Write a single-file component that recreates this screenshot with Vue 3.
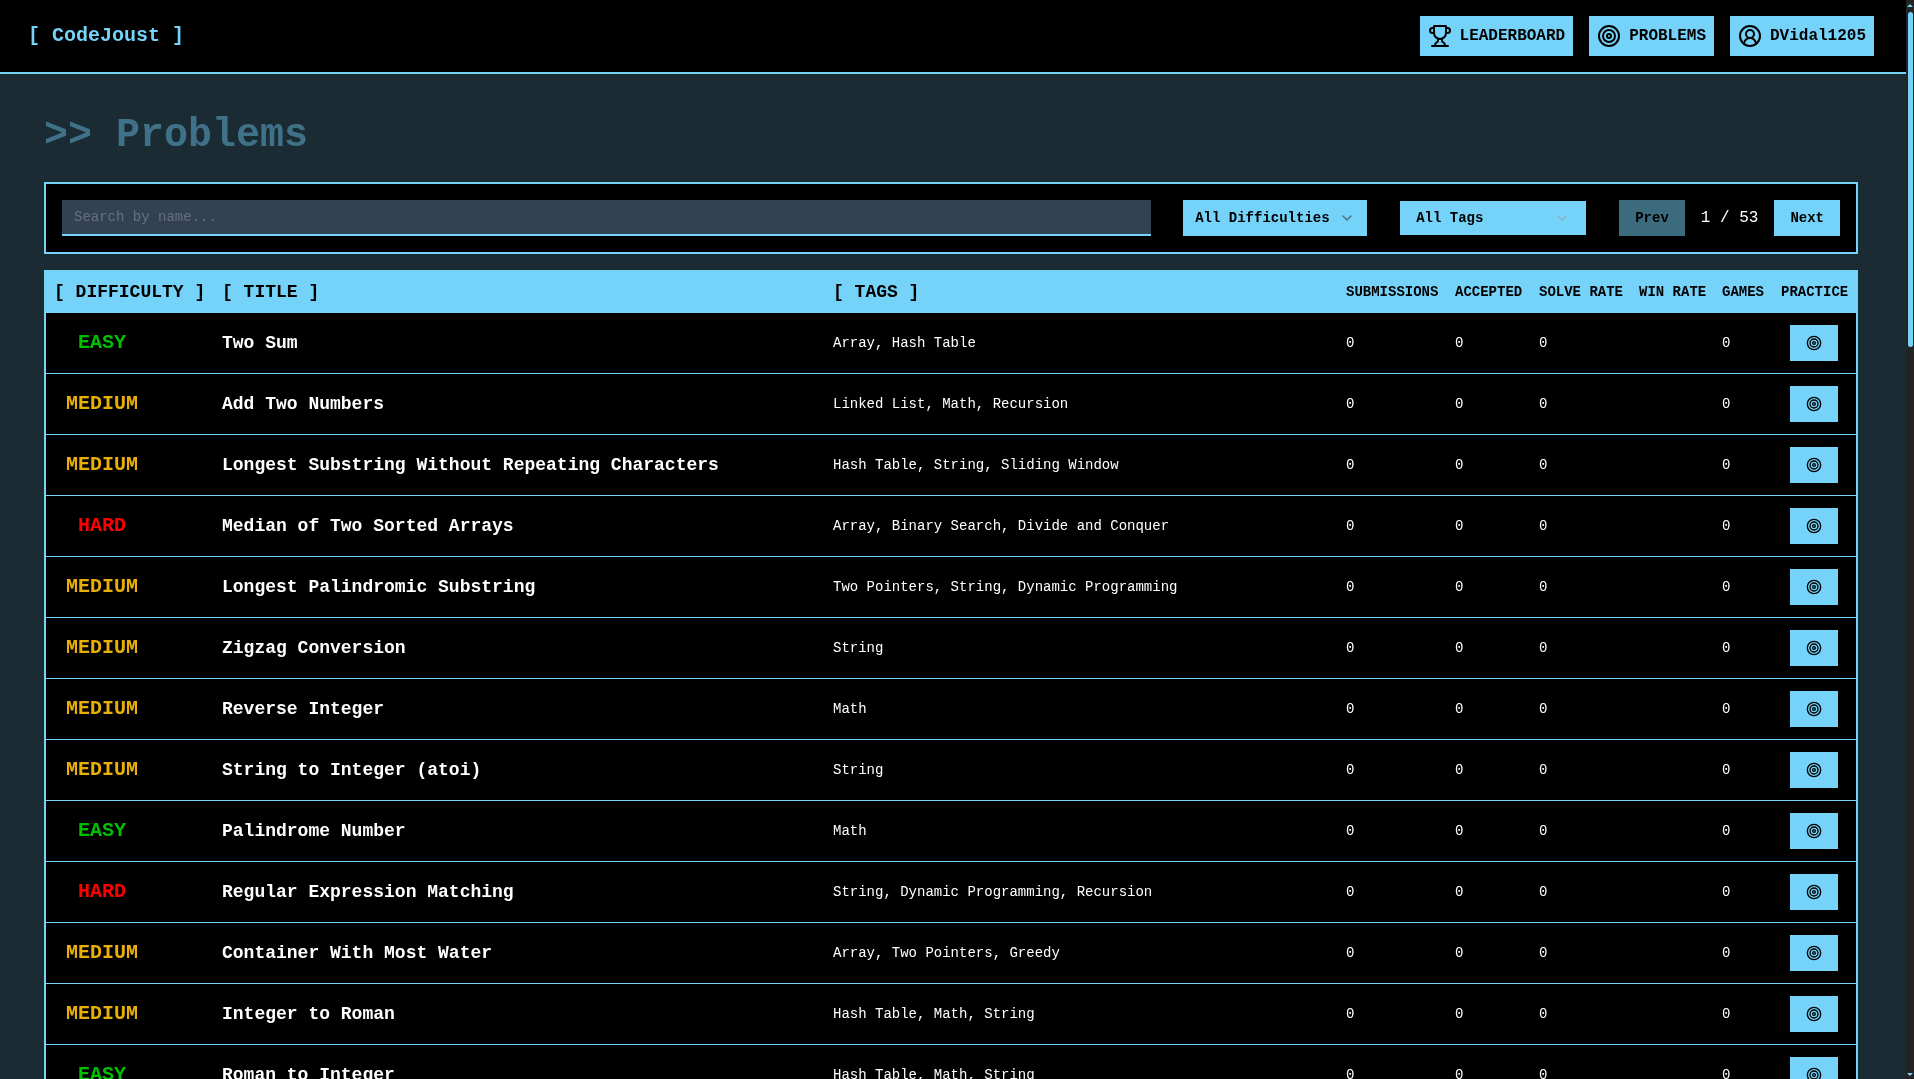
<template>
  <div class="page">
    <header class="topbar">
      <div class="logo">[ CodeJoust ]</div>
      <nav class="nav">
        <a class="navBtn" href="#">
          <svg class="ico" viewBox="0 0 24 24"><path d="M6 9H4.5a2.5 2.5 0 0 1 0-5H6" /><path d="M18 9h1.5a2.5 2.5 0 0 0 0-5H18" /><path d="M4 22h16" /><path d="M10 14.66V17c0 .55-.47.98-.97 1.21C7.85 18.75 7 20.24 7 22" /><path d="M14 14.66V17c0 .55.47.98.97 1.21C16.15 18.75 17 20.24 17 22" /><path d="M18 2H6v7a6 6 0 0 0 12 0V2Z" /></svg>
          LEADERBOARD
        </a>
        <a class="navBtn" href="#">
          <svg class="ico" viewBox="0 0 24 24"><circle cx="12" cy="12" r="10" /><circle cx="12" cy="12" r="6" /><circle cx="12" cy="12" r="2" /></svg>
          PROBLEMS
        </a>
        <a class="navBtn" href="#">
          <svg class="ico" viewBox="0 0 24 24"><circle cx="12" cy="12" r="10" /><circle cx="12" cy="10" r="4" /><path d="M18 20a6 6 0 0 0-12 0" /></svg>
          DVidal1205
        </a>
      </nav>
    </header>

    <main class="content">
      <h1 class="title">&gt;&gt; Problems</h1>

      <div class="filters">
        <input class="search" type="text" placeholder="Search by name..." />
        <div class="selectWrap diffSelect">
          <select>
            <option>All Difficulties</option>
            <option>Easy</option>
            <option>Medium</option>
            <option>Hard</option>
          </select>
          <svg class="chev" viewBox="0 0 24 24"><path d="m6 9 6 6 6-6" /></svg>
        </div>
        <div class="selectWrap tagSelect">
          <select>
            <option>All Tags</option>
          </select>
          <svg class="chev" viewBox="0 0 24 24"><path d="m6 9 6 6 6-6" /></svg>
        </div>
        <div class="pager">
          <button class="pageBtn off">Prev</button>
          <span class="pageNum">1 / 53</span>
          <button class="pageBtn">Next</button>
        </div>
      </div>

      <div class="tableBox">
        <table>
          <colgroup>
            <col style="width: 168px" />
            <col style="width: 611px" />
            <col style="width: 513px" />
            <col style="width: 109px" />
            <col style="width: 84px" />
            <col style="width: 100px" />
            <col style="width: 83px" />
            <col style="width: 59px" />
            <col style="width: 83px" />
          </colgroup>
          <thead>
            <tr>
              <th class="big">[ DIFFICULTY ]</th>
              <th class="big">[ TITLE ]</th>
              <th class="big">[ TAGS ]</th>
              <th>SUBMISSIONS</th>
              <th>ACCEPTED</th>
              <th>SOLVE RATE</th>
              <th>WIN RATE</th>
              <th>GAMES</th>
              <th>PRACTICE</th>
            </tr>
          </thead>
          <tbody>
            <tr v-for="item in problems" :key="item.title">
              <td><span class="diff" :class="item.diff.toLowerCase()">{{ item.diff }}</span></td>
              <td class="name">{{ item.title }}</td>
              <td>{{ item.tags }}</td>
              <td>0</td>
              <td>0</td>
              <td>0</td>
              <td></td>
              <td>0</td>
              <td class="act">
                <button class="practice">
                  <svg class="ico small" viewBox="0 0 24 24"><circle cx="12" cy="12" r="10" /><circle cx="12" cy="12" r="6" /><circle cx="12" cy="12" r="2" /></svg>
                </button>
              </td>
            </tr>
          </tbody>
        </table>
      </div>
    </main>

    <!-- the window's own scrollbar, the browser here hides the native one -->
    <div class="scrollbar">
      <span class="arrow up"></span>
      <div class="track"><div class="thumb"></div></div>
      <span class="arrow down"></span>
    </div>
  </div>
</template>

<script setup>
const rows = [
  ['EASY', 'Two Sum', 'Array, Hash Table'],
  ['MEDIUM', 'Add Two Numbers', 'Linked List, Math, Recursion'],
  ['MEDIUM', 'Longest Substring Without Repeating Characters', 'Hash Table, String, Sliding Window'],
  ['HARD', 'Median of Two Sorted Arrays', 'Array, Binary Search, Divide and Conquer'],
  ['MEDIUM', 'Longest Palindromic Substring', 'Two Pointers, String, Dynamic Programming'],
  ['MEDIUM', 'Zigzag Conversion', 'String'],
  ['MEDIUM', 'Reverse Integer', 'Math'],
  ['MEDIUM', 'String to Integer (atoi)', 'String'],
  ['EASY', 'Palindrome Number', 'Math'],
  ['HARD', 'Regular Expression Matching', 'String, Dynamic Programming, Recursion'],
  ['MEDIUM', 'Container With Most Water', 'Array, Two Pointers, Greedy'],
  ['MEDIUM', 'Integer to Roman', 'Hash Table, Math, String'],
  ['EASY', 'Roman to Integer', 'Hash Table, Math, String'],
  ['EASY', 'Longest Common Prefix', 'String, Trie'],
  ['MEDIUM', '3Sum', 'Array, Two Pointers, Sorting'],
  ['MEDIUM', '3Sum Closest', 'Array, Two Pointers, Sorting'],
  ['MEDIUM', 'Letter Combinations of a Phone Number', 'Hash Table, String, Backtracking'],
  ['MEDIUM', '4Sum', 'Array, Two Pointers, Sorting'],
  ['MEDIUM', 'Remove Nth Node From End of List', 'Linked List, Two Pointers'],
  ['EASY', 'Valid Parentheses', 'String, Stack'],
  ['EASY', 'Merge Two Sorted Lists', 'Linked List, Recursion'],
  ['MEDIUM', 'Generate Parentheses', 'String, Dynamic Programming, Backtracking'],
  ['HARD', 'Merge k Sorted Lists', 'Linked List, Divide and Conquer, Heap'],
  ['MEDIUM', 'Swap Nodes in Pairs', 'Linked List, Recursion'],
  ['HARD', 'Reverse Nodes in k-Group', 'Linked List, Recursion'],
  ['EASY', 'Remove Duplicates from Sorted Array', 'Array, Two Pointers'],
  ['EASY', 'Remove Element', 'Array, Two Pointers'],
  ['EASY', 'Find the Index of the First Occurrence in a String', 'Two Pointers, String'],
  ['MEDIUM', 'Divide Two Integers', 'Math, Bit Manipulation'],
  ['HARD', 'Substring with Concatenation of All Words', 'Hash Table, String, Sliding Window'],
  ['MEDIUM', 'Next Permutation', 'Array, Two Pointers'],
  ['HARD', 'Longest Valid Parentheses', 'String, Dynamic Programming, Stack'],
  ['MEDIUM', 'Search in Rotated Sorted Array', 'Array, Binary Search'],
  ['MEDIUM', 'Find First and Last Position of Element', 'Array, Binary Search'],
  ['EASY', 'Search Insert Position', 'Array, Binary Search'],
  ['MEDIUM', 'Valid Sudoku', 'Array, Hash Table, Matrix'],
  ['HARD', 'Sudoku Solver', 'Array, Hash Table, Backtracking'],
  ['MEDIUM', 'Count and Say', 'String'],
  ['MEDIUM', 'Combination Sum', 'Array, Backtracking'],
  ['MEDIUM', 'Combination Sum II', 'Array, Backtracking'],
  ['HARD', 'First Missing Positive', 'Array, Hash Table'],
  ['HARD', 'Trapping Rain Water', 'Array, Two Pointers, Stack'],
  ['MEDIUM', 'Multiply Strings', 'Math, String, Simulation'],
  ['HARD', 'Wildcard Matching', 'String, Dynamic Programming, Greedy'],
  ['MEDIUM', 'Jump Game II', 'Array, Dynamic Programming, Greedy'],
  ['MEDIUM', 'Permutations', 'Array, Backtracking'],
  ['MEDIUM', 'Permutations II', 'Array, Backtracking, Sorting'],
  ['MEDIUM', 'Rotate Image', 'Array, Math, Matrix'],
  ['MEDIUM', 'Group Anagrams', 'Array, Hash Table, String'],
  ['MEDIUM', 'Pow(x, n)', 'Math, Recursion'],
]
const problems = rows.map(([diff, title, tags]) => ({ diff, title, tags }))
</script>

<style>
body {
  background: #1b2b33;
}
</style>

<style scoped>
.page {
  padding-right: 8px;
  font-family: "Liberation Mono", monospace;
  color: #fff;
  will-change: opacity;
}
.topbar {
  display: flex;
  justify-content: space-between;
  align-items: center;
  height: 72px;
  padding: 0 32px 0 28px;
  background: #000;
  border-bottom: 2px solid #75d2f8;
}
.logo {
  font-size: 20px;
  font-weight: 700;
  color: #75d2f8;
  margin-top: -2px;
}
.nav {
  display: flex;
  gap: 16px;
}
.navBtn {
  display: flex;
  align-items: center;
  gap: 8px;
  height: 40px;
  padding: 0 8px;
  background: #75d2f8;
  color: #000;
  font-size: 16px;
  font-weight: 700;
  text-decoration: none;
}
.ico {
  width: 24px;
  height: 24px;
  fill: none;
  stroke: #000;
  stroke-width: 2;
  stroke-linecap: round;
  stroke-linejoin: round;
}
.ico.small {
  width: 16px;
  height: 16px;
}
.content {
  padding: 39px 48px 48px 44px;
}
.title {
  margin: 0 0 24px;
  font-size: 40px;
  line-height: 45px;
  font-weight: 700;
  color: #3f7288;
}
.filters {
  display: flex;
  align-items: center;
  gap: 32px;
  padding: 16px;
  background: #000;
  border: 2px solid #75d2f8;
}
.search {
  flex: 1;
  min-width: 0;
  height: 36px;
  box-sizing: border-box;
  padding: 0 12px;
  background: #334155;
  border: none;
  border-bottom: 2px solid #75d2f8;
  outline: none;
  color: #fff;
  font-family: inherit;
  font-size: 14px;
}
.search::placeholder {
  color: #667085;
}
.selectWrap {
  position: relative;
  flex: none;
}
.selectWrap select {
  display: block;
  width: 100%;
  appearance: none;
  border: none;
  border-radius: 0;
  outline: none;
  background: #75d2f8;
  color: #000;
  font-family: inherit;
  font-size: 14px;
  font-weight: 700;
}
.diffSelect {
  width: 184px;
  margin-right: 1px;
}
.diffSelect select {
  height: 36px;
  padding: 0 12px;
}
.tagSelect {
  width: 186px;
}
.tagSelect select {
  height: 34px;
  padding: 0 16px;
}
.chev {
  position: absolute;
  top: 50%;
  width: 16px;
  height: 16px;
  margin-top: -8px;
  fill: none;
  stroke-width: 2;
  stroke-linecap: round;
  stroke-linejoin: round;
  pointer-events: none;
}
.diffSelect .chev {
  right: 12px;
  stroke: #4d6b7a;
}
.tagSelect .chev {
  right: 16px;
  stroke: #8fb0c2;
}
.pager {
  display: flex;
  align-items: center;
  gap: 16px;
  flex: none;
  margin-left: 1px;
}
.pageNum {
  font-size: 16px;
}
.pageBtn {
  height: 36px;
  padding: 0 16px;
  border: none;
  background: #75d2f8;
  color: #000;
  font-family: inherit;
  font-size: 14px;
  font-weight: 700;
}
.pageBtn.off {
  background: #3c6b7e;
}
.tableBox {
  margin-top: 16px;
  border: 2px solid #75d2f8;
  background: #000;
}
table {
  width: 100%;
  table-layout: fixed;
  border-collapse: separate;
  border-spacing: 0;
}
th {
  box-sizing: border-box;
  height: 41px;
  padding: 0 8px 2px;
  background: #75d2f8;
  color: #000;
  font-size: 14px;
  font-weight: 700;
  text-align: left;
  white-space: nowrap;
}
th.big {
  font-size: 18px;
}
td {
  box-sizing: border-box;
  height: 61px;
  padding: 0 8px;
  font-size: 14px;
  border-bottom: 1px solid #75d2f8;
  white-space: nowrap;
}
tbody tr:last-child td {
  border-bottom: none;
}
.name {
  font-size: 18px;
  font-weight: 700;
}
.diff {
  display: block;
  width: 96px;
  margin-top: -2px;
  text-align: center;
  font-size: 20px;
  font-weight: 700;
}
.easy {
  color: #00c000;
}
.medium {
  color: #e8b007;
}
.hard {
  color: #ff0000;
}
td.act {
  padding-left: 17px;
}
.practice {
  display: flex;
  align-items: center;
  justify-content: center;
  width: 48px;
  height: 36px;
  padding: 0;
  border: none;
  background: #75d2f8;
}
.scrollbar {
  position: fixed;
  top: 0;
  right: 0;
  bottom: 0;
  display: flex;
  flex-direction: column;
  align-items: center;
  width: 8px;
  background: #232323;
}
.arrow {
  flex: none;
  width: 0;
  height: 0;
  border-left: 3px solid transparent;
  border-right: 3px solid transparent;
}
.arrow.up {
  margin: 4px 0;
  border-bottom: 3px solid #75d2f8;
}
.arrow.down {
  margin: 3px 0;
  border-top: 3px solid #75d2f8;
}
.track {
  flex: 1;
  align-self: stretch;
  padding: 1px 0 0 2px;
}
.thumb {
  width: 5px;
  height: 335px;
  background: #75d2f8;
  border-radius: 3px;
}
</style>
